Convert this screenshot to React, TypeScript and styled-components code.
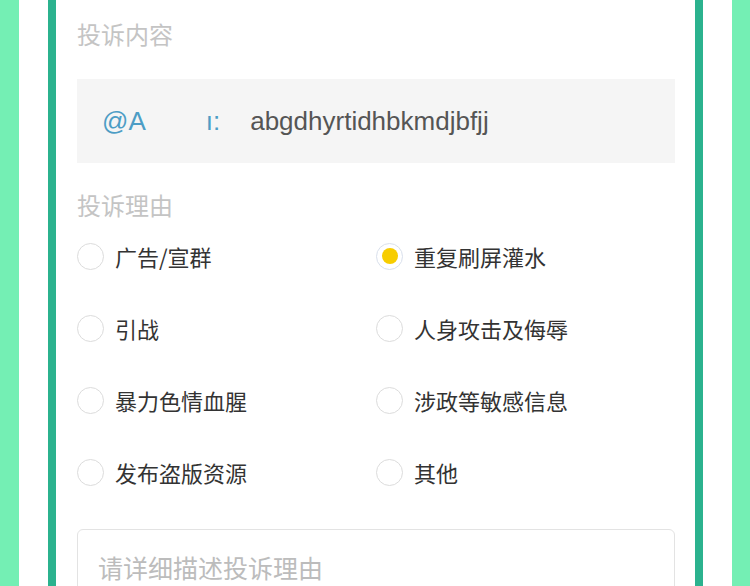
import styled, { createGlobalStyle } from "styled-components";

const GlobalStyle = createGlobalStyle`
  html, body {
    margin: 0;
    padding: 0;
    background: #74efb4;
  }
  body {
    font-family: "Liberation Sans", "Noto Sans CJK SC", sans-serif;
  }
`;

const Page = styled.div`
  height: 586px;
  overflow: hidden;
  padding: 0 18px 0 19px;
  background: #74efb4;
`;

const Frame = styled.div`
  height: 100%;
  background: #ffffff;
  padding: 0 29px;
`;

const Card = styled.div`
  height: 100%;
  background: #ffffff;
  border-left: 8px solid #2bb28e;
  border-right: 8px solid #2bb28e;
  padding: 14px 20px 0 21px;
`;

const Label = styled.div<{ $top?: number }>`
  margin-top: ${(p) => p.$top ?? 0}px;
  height: 40px;
  line-height: 40px;
  font-size: 24px;
  color: #c4c4c4;
  font-family: "Noto Sans CJK SC", sans-serif;
`;

const Quote = styled.div`
  margin-top: 25px;
  height: 84px;
  background: #f5f5f5;
  display: flex;
  align-items: center;
  padding-left: 25px;
  font-family: "Liberation Sans", sans-serif;
  font-size: 26px;
`;

const Mention = styled.span`
  color: #4d9dc5;
`;

const MentionGap = styled.span`
  display: inline-block;
  width: 60px;
`;

const Colon = styled.span`
  color: #4d9dc5;
  margin-right: 30px;
`;

const Body = styled.span`
  color: #555555;
`;

const Options = styled.div`
  margin-top: 7px;
  display: grid;
  grid-template-columns: 299px 1fr;
  row-gap: 24px;
`;

const Option = styled.label`
  height: 48px;
  display: flex;
  align-items: center;
  gap: 11px;
  font-size: 22px;
  color: #333333;
  font-family: "Noto Sans CJK SC", sans-serif;
`;

const Radio = styled.span<{ $on?: boolean }>`
  width: 27px;
  height: 27px;
  box-sizing: border-box;
  border-radius: 50%;
  border: 1.5px solid ${(p) => (p.$on ? "#d9e0ec" : "#dcdcdc")};
  display: flex;
  align-items: center;
  justify-content: center;
  &::after {
    content: "";
    width: 16px;
    height: 16px;
    border-radius: 50%;
    background: ${(p) => (p.$on ? "#f7cd00" : "transparent")};
  }
`;

const TextArea = styled.div`
  margin-top: 33px;
  height: 100px;
  border: 1.5px solid #e3e3e3;
  border-radius: 6px;
  padding: 18px 20px;
  font-size: 25px;
  color: #bcbcbc;
  font-family: "Noto Sans CJK SC", sans-serif;
  line-height: 38px;
`;

const reasons = [
  { text: "广告/宣群" },
  { text: "重复刷屏灌水", on: true },
  { text: "引战" },
  { text: "人身攻击及侮辱" },
  { text: "暴力色情血腥" },
  { text: "涉政等敏感信息" },
  { text: "发布盗版资源" },
  { text: "其他" },
];

export default function App() {
  return (
    <>
      <GlobalStyle />
      <Page>
        <Frame>
          <Card>
            <Label>投诉内容</Label>
            <Quote>
              <Mention>@A</Mention>
              <MentionGap />
              <Colon>ı:</Colon>
              <Body>abgdhyrtidhbkmdjbfjj</Body>
            </Quote>
            <Label $top={22}>投诉理由</Label>
            <Options>
              {reasons.map((r, i) => (
                <Option key={i}>
                  <Radio $on={r.on} />
                  {r.text}
                </Option>
              ))}
            </Options>
            <TextArea>请详细描述投诉理由</TextArea>
          </Card>
        </Frame>
      </Page>
    </>
  );
}
